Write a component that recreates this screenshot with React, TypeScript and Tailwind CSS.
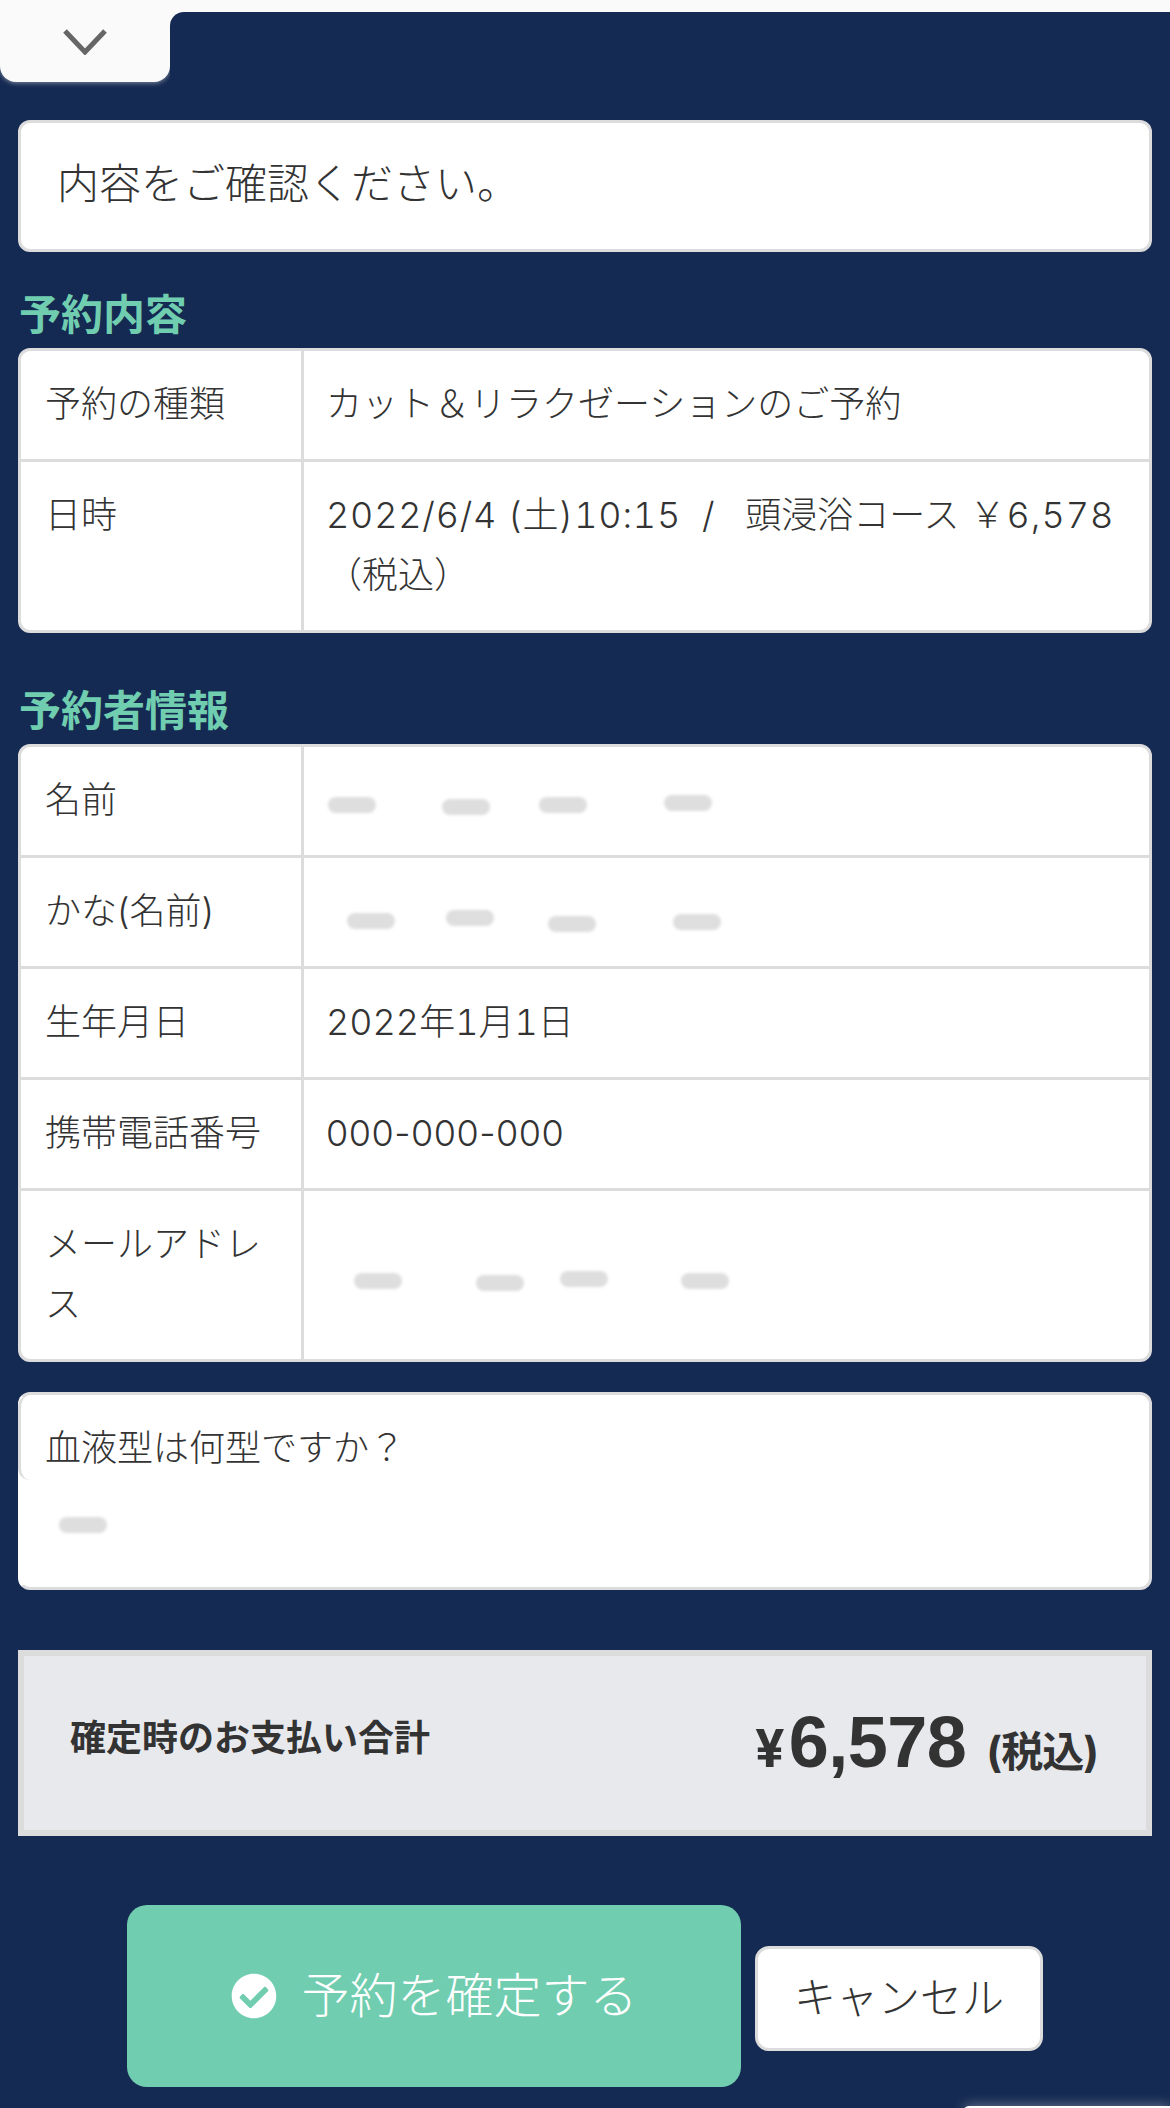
import React from "react";
import { FaCheckCircle } from "react-icons/fa";

const font = "font-['Inter','Noto_Sans_CJK_JP',sans-serif]";

function Blob({ className }: { className: string }) {
  return <span className={`block h-[16px] w-[48px] shrink-0 rounded-full bg-[#dedede] blur-[1.5px] ${className}`} />;
}

function Row({
  label,
  children,
  tall,
  last,
}: {
  label: React.ReactNode;
  children?: React.ReactNode;
  tall?: boolean;
  last?: boolean;
}) {
  return (
    <div className={`flex ${last ? "" : "border-b-[3px] border-[#dcdcdc]"}`}>
      <div className={`w-[280px] shrink-0 pl-[24px] pr-[20px] pt-[23px] ${tall ? "h-[168px]" : "h-[108px]"}`}>{label}</div>
      <div className="flex-1 border-l-[3px] border-[#dcdcdc] pl-[22px] pr-[20px] pt-[23px]">{children}</div>
    </div>
  );
}

function Heading({ children, className }: { children: React.ReactNode; className: string }) {
  return <h2 className={`mb-[14px] ml-[1px] h-[40px] text-[42px] leading-[42px] font-bold text-[#70cdaf] ${className}`}>{children}</h2>;
}

export default function App() {
  return (
    <div className={`relative h-[2108px] w-[1170px] overflow-hidden bg-[#152a52] text-[36px] leading-[60px] font-light text-[#333333] ${font}`}>
      <div className="flex h-[82px]">
        <div className="flex w-[170px] items-start justify-center rounded-b-[16px] bg-[#fafafa] pt-[29px] shadow-[0_1px_5px_rgba(255,255,255,0.45)]">
          <svg width="44" height="26" viewBox="0 0 44 26" fill="none" stroke="#666666" strokeWidth="5">
            <path d="M2 2 L22 23 L42 2" />
          </svg>
        </div>
        <div className="flex-1 bg-[#fafafa]">
          <div className="mt-[12px] h-[70px] rounded-tl-[14px] bg-[#152a52]" />
        </div>
      </div>

      <div className="px-[18px]">
        <div className="mt-[38px] flex h-[132px] items-center rounded-[12px] border-[3px] border-[#dcdcdc] bg-white pb-[5px] pl-[36px] text-[42px]">
          内容をご確認ください。
        </div>

        <Heading className="mt-[42px]">予約内容</Heading>
        <div className="rounded-[12px] border-[3px] border-[#dcdcdc] bg-white">
          <Row label="予約の種類">カット＆リラクゼーションのご予約</Row>
          <Row label="日時" tall last>
            <span className="tabular-nums tracking-[0.8px]">2022/6/4 (土)10:15&nbsp;&nbsp;/&nbsp;&nbsp;</span><span className="ml-[9px]">頭浸浴コース</span>&nbsp;<span className="tabular-nums tracking-[1px]">￥6,578</span>（税込）
          </Row>
        </div>

        <Heading className="mt-[57px]">予約者情報</Heading>
        <div className="rounded-[12px] border-[3px] border-[#dcdcdc] bg-white">
          <Row label="名前">
            <div className="flex items-start">
              <Blob className="ml-[2px] mt-[27px]" />
              <Blob className="ml-[66px] mt-[29px]" />
              <Blob className="ml-[49px] mt-[27px]" />
              <Blob className="ml-[77px] mt-[25px]" />
            </div>
          </Row>
          <Row label="かな(名前)">
            <div className="flex items-start">
              <Blob className="ml-[21px] mt-[32px]" />
              <Blob className="ml-[51px] mt-[29px]" />
              <Blob className="ml-[54px] mt-[35px]" />
              <Blob className="ml-[77px] mt-[33px]" />
            </div>
          </Row>
          <Row label="生年月日"><span className="tabular-nums">2022年1月1日</span></Row>
          <Row label="携帯電話番号"><span className="tracking-[0.5px]">000-000-000</span></Row>
          <Row label="メールアドレス" tall last>
            <div className="flex items-start">
              <Blob className="ml-[28px] mt-[59px]" />
              <Blob className="ml-[74px] mt-[61px]" />
              <Blob className="ml-[36px] mt-[57px]" />
              <Blob className="ml-[73px] mt-[59px]" />
            </div>
          </Row>
        </div>

        <div className="mt-[30px] h-[198px] rounded-[12px] border-[3px] border-[#dcdcdc] border-l-white bg-white">
          <div className="-ml-[3px] h-[85px] rounded-l-[12px] border-l-[3px] border-[#dcdcdc] pl-[24px] pt-[23px]">血液型は何型ですか？</div>
          <Blob className="ml-[38px] mt-[37px]" />
        </div>

        <div className="mt-[60px] flex h-[186px] items-center justify-between border-[6px] border-[#dcdcdc] bg-[#e8e9ed] pl-[46px] pr-[48px] font-bold">
          <div className="pb-[10px]">確定時のお支払い合計</div>
          <div className="flex items-baseline pb-[3px]">
            <span className="mr-[4px] text-[52px] leading-none">¥</span>
            <span className="font-['Liberation_Sans',sans-serif] text-[72px] leading-none tracking-[-0.5px]">6,578</span>
            <span className="ml-[20px] text-[42px] leading-none tracking-[-1px]">(税込)</span>
          </div>
        </div>
      </div>

      <div className="mt-[69px] flex items-center pl-[127px]">
        <button className="flex h-[182px] w-[614px] items-center justify-center gap-[24px] rounded-[20px] bg-[#70cdaf] pl-[1px] text-[48px] font-light text-white">
          <FaCheckCircle className="h-[46px] w-[46px] text-white" />
          <span>予約を確定する</span>
        </button>
        <button className="ml-[14px] mt-[4px] flex h-[105px] w-[288px] items-center justify-center rounded-[14px] border-[3px] border-[#dcdcdc] bg-white text-[42px] font-light text-[#333333]">
          キャンセル
        </button>
      </div>

      <div className="absolute bottom-[-4px] right-0 h-[6px] w-[207px] rounded-tl-[6px] bg-white shadow-[0_0_12px_rgba(255,255,255,0.5)]" />
    </div>
  );
}
